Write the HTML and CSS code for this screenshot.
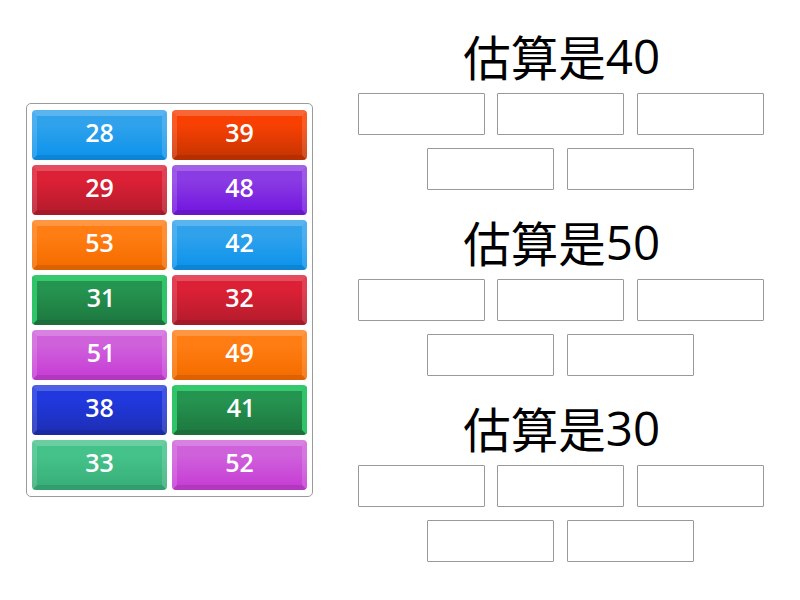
FILE: index.html
```
<!DOCTYPE html>
<html lang="zh-CN">
<head>
    <meta charset="UTF-8">
    <meta name="viewport" content="width=device-width, initial-scale=1.0">
    <title>估算</title>
    <link rel="stylesheet" href="styles.css">
</head>
<body>
    <main class="board">
        <div class="tiles">
            <div class="tile blue">28</div>
            <div class="tile orange-red">39</div>
            <div class="tile red">29</div>
            <div class="tile purple">48</div>
            <div class="tile orange">53</div>
            <div class="tile blue">42</div>
            <div class="tile green ends-one">31</div>
            <div class="tile red">32</div>
            <div class="tile pink ends-one">51</div>
            <div class="tile orange">49</div>
            <div class="tile navy">38</div>
            <div class="tile green ends-one">41</div>
            <div class="tile mint">33</div>
            <div class="tile pink">52</div>
        </div>

        <div class="groups">
            <section class="group">
                <h2><span>估算是</span>40</h2>
                <div class="slots">
                    <div class="slot"></div>
                    <div class="slot"></div>
                    <div class="slot"></div>
                    <div class="slot"></div>
                    <div class="slot"></div>
                </div>
            </section>
            <section class="group">
                <h2><span>估算是</span>50</h2>
                <div class="slots">
                    <div class="slot"></div>
                    <div class="slot"></div>
                    <div class="slot"></div>
                    <div class="slot"></div>
                    <div class="slot"></div>
                </div>
            </section>
            <section class="group">
                <h2><span>估算是</span>30</h2>
                <div class="slots">
                    <div class="slot"></div>
                    <div class="slot"></div>
                    <div class="slot"></div>
                    <div class="slot"></div>
                    <div class="slot"></div>
                </div>
            </section>
        </div>
    </main>
</body>
</html>
```
FILE: styles.css
```
* {
    box-sizing: border-box;
}
body {
    margin: 0;
    background: #fff;
    font-family: "Open Sans", "Noto Sans CJK SC", sans-serif;
}
.board {
    display: flex;
    align-items: flex-start;
    height: 600px;
    overflow: hidden;
}

/* Number tiles */
.tiles {
    display: grid;
    grid-template-columns: 135px 135px;
    grid-auto-rows: 50px;
    gap: 5px;
    margin: 103px 0 0 26px;
    padding: 6px 5px;
    border: 1px solid #9a9a9a;
    border-radius: 5px;
}
.tile {
    border-style: solid;
    border-width: 6px 5px 5px;
    border-color: rgba(255, 255, 255, 0.2) rgba(255, 255, 255, 0.14) rgba(0, 0, 0, 0.1);
    border-radius: 4px;
    background-origin: border-box;
    color: #fff;
    font-size: 25px;
    font-weight: 600;
    line-height: 33px;
    text-align: center;
}
/* a final 1 leaves space on its right, so centre by eye */
.ends-one {
    padding-left: 3px;
}
.blue {
    background-image: linear-gradient(#30a2eb 30%, #0f94ec 90%);
}
.orange-red {
    background-image: linear-gradient(#f84003 30%, #cb3501 90%);
}
.red {
    background-image: linear-gradient(#dc2035 30%, #b81c2d 90%);
}
.purple {
    background-image: linear-gradient(#8b3be3 30%, #7419e0 90%);
}
.orange {
    background-image: linear-gradient(#ff7d13 30%, #f56d00 90%);
}
.green {
    border-color: #33c96c #30c468 #1c6f3b;
    background-image: linear-gradient(#259450 30%, #1e7a41 90%);
}
.pink {
    background-image: linear-gradient(#cf61db 30%, #c73fd5 90%);
}
.navy {
    background-image: linear-gradient(#2138de 30%, #1d2fb8 90%);
}
.mint {
    background-image: linear-gradient(#45c28a 30%, #39b07a 90%);
}

/* Drop zones */
.groups {
    width: 420px;
    margin: 26px 0 0 37.7px;
}
.group {
    height: 186px;
}
.group h2 {
    height: 67px;
    margin: 0;
    padding-left: 2px;
    color: #000;
    font-size: 47.5px;
    font-weight: 400;
    line-height: 60px;
    text-align: center;
}
.group h2 span {
    line-height: 1;
    vertical-align: -2px;
}
.slots {
    display: flex;
    flex-wrap: wrap;
    justify-content: center;
    gap: 13px 12.6px;
}
.slot {
    width: 127px;
    height: 42px;
    border: 1px solid #999;
    border-radius: 1px;
}
```
